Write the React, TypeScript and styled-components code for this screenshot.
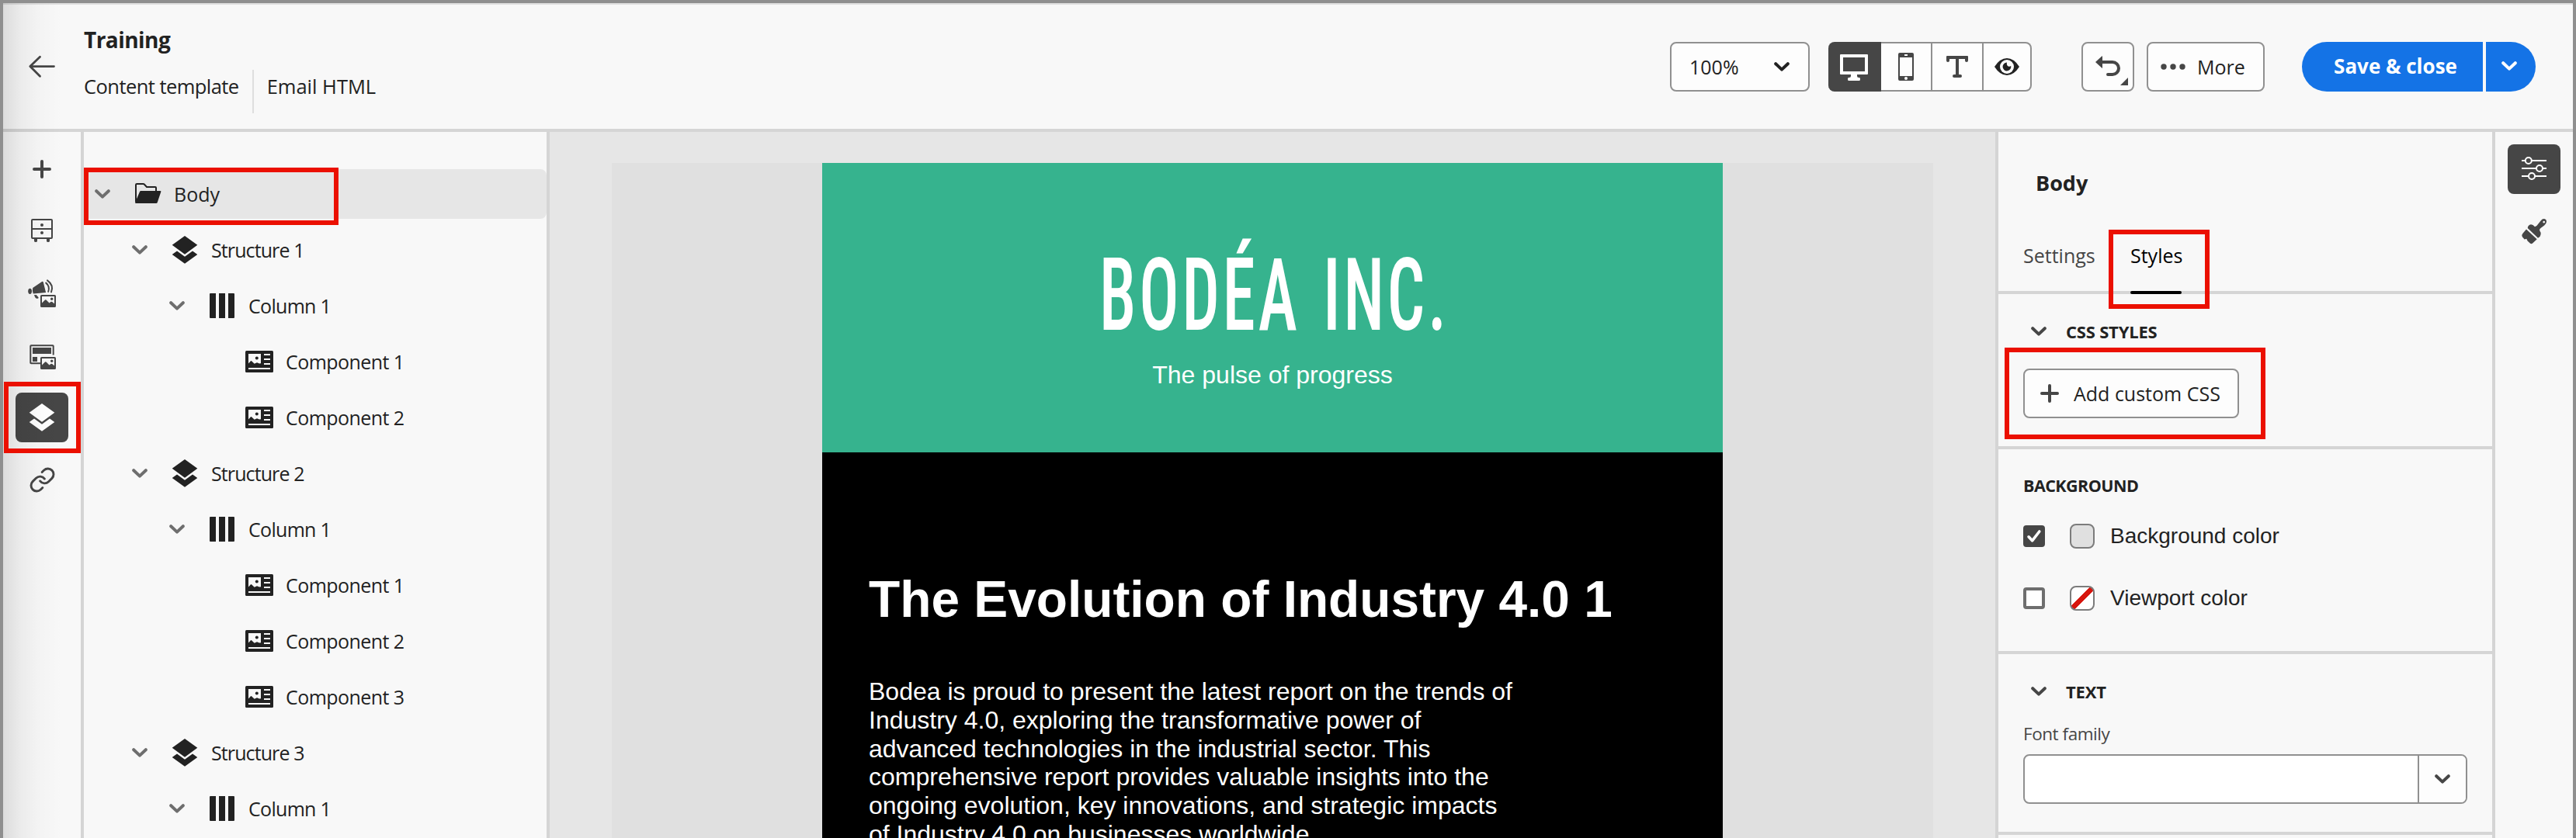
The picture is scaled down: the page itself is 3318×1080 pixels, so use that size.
import React from 'react';
import styled, { createGlobalStyle, css } from 'styled-components';
import { Link } from 'lucide-react';

const ink = '#222222';
const iconGrey = '#464646';
const line = '#d5d5d5';
const surface = '#f8f8f8';
const control = '#909090';
const alertRed = '#eb1000';

const GlobalStyle = createGlobalStyle`
  *, *::before, *::after { box-sizing: border-box; }
  body { margin: 0; background: ${surface}; }
  button { font: inherit; color: inherit; padding: 0; margin: 0; cursor: pointer; }
  svg { display: block; flex: none; }
`;

const Frame = styled.div`
  position: relative;
  display: flex;
  flex-direction: column;
  width: 3318px;
  height: 1080px;
  overflow: hidden;
  border: 4px solid #8f8f8f;
  border-bottom: 0;
  background: ${surface};
  color: ${ink};
  font-family: 'Open Sans', 'Noto Sans', sans-serif;
  font-size: 25px;
  white-space: nowrap;
`;

const EdgeShade = styled.div`
  position: absolute;
  inset: 0 auto 0 0;
  width: 76px;
  pointer-events: none;
  background: linear-gradient(
    to right,
    rgba(0, 0, 0, 0.115),
    rgba(0, 0, 0, 0.05) 30%,
    rgba(0, 0, 0, 0.02) 60%,
    rgba(0, 0, 0, 0)
  );
`;

const Highlight = styled.span<{ $x: number; $y: number; $w: number; $h: number }>`
  position: absolute;
  z-index: 2;
  left: ${(p) => p.$x}px;
  top: ${(p) => p.$y}px;
  width: ${(p) => p.$w}px;
  height: ${(p) => p.$h}px;
  border: 6px solid ${alertRed};
  pointer-events: none;
`;

/* ---------- header ---------- */

const Header = styled.header`
  display: flex;
  flex: none;
  height: 166px;
  border-top: 2px solid #dedede;
  border-bottom: 4px solid ${line};
`;

const BackButton = styled.button`
  display: flex;
  align-items: center;
  justify-content: center;
  width: 104px;
  padding-right: 4px;
  border: 0;
  background: none;
`;

const TitleBlock = styled.div`
  flex: 1;
  padding-top: 25px;
`;

const PageTitle = styled.h1`
  margin: 0 0 19px;
  font-size: 28px;
  line-height: 40px;
  font-weight: 700;
  letter-spacing: -0.55px;
`;

const Crumbs = styled.div`
  display: flex;
  height: 56px;
  font-size: 25.5px;
  line-height: 42px;
`;

const Crumb = styled.span`
  letter-spacing: -0.55px;
  & + & {
    letter-spacing: 0;
    margin-left: 17px;
    padding-left: 17px;
    border-left: 2px solid #dedede;
  }
`;

const Toolbar = styled.div`
  display: flex;
  align-items: center;
  padding-right: 48px;
`;

const box = css`
  height: 64px;
  border: 2px solid ${control};
  border-radius: 8px;
  background: #fdfdfd;
`;

const ZoomSelect = styled.button`
  ${box}
  display: flex;
  align-items: center;
  justify-content: space-between;
  width: 180px;
  padding: 0 24px 0 23px;
  margin-right: 24px;
`;

const ViewGroup = styled.div`
  display: flex;
  margin-right: 64px;
`;

const ViewButton = styled.button<{ $active?: boolean }>`
  ${box}
  display: flex;
  align-items: center;
  justify-content: center;
  width: 66px;
  border-left: 0;
  border-radius: 0;
  &:first-child { width: 68px; border-radius: 8px 0 0 8px; }
  &:last-child { width: 62px; border-radius: 0 8px 8px 0; }
  ${(p) => p.$active && css`
    background: ${iconGrey};
    border-color: ${iconGrey};
  `}
`;

const UndoButton = styled.button`
  ${box}
  width: 68px;
  margin-right: 16px;
`;

const MoreButton = styled.button`
  ${box}
  display: flex;
  align-items: center;
  width: 152px;
  gap: 15px;
  padding-left: 16px;
  margin-right: 48px;
`;

const SaveGroup = styled.div`
  display: flex;
  gap: 4px;
  color: #fff;
`;

const SaveButton = styled.button`
  width: 233px;
  height: 64px;
  padding: 0 0 2px 8px;
  border: 0;
  border-radius: 32px 0 0 32px;
  background: #1473e6;
  font-size: 26px;
  font-weight: 700;
`;

const SaveMenuButton = styled.button`
  display: flex;
  align-items: center;
  width: 64px;
  padding: 0 0 2px 20px;
  border: 0;
  border-radius: 0 32px 32px 0;
  background: #1473e6;
`;

/* ---------- body ---------- */

const Workspace = styled.div`
  display: flex;
  flex: 1;
  min-height: 0;
`;

const Rail = styled.nav<{ $side: 'left' | 'right' }>`
  display: flex;
  flex-direction: column;
  align-items: center;
  flex: none;
  gap: 16px;
  width: 104px;
  padding-top: 16px;
  ${(p) => (p.$side === 'left' ? 'border-right' : 'border-left')}: 4px solid ${line};
`;

const RailButton = styled.button<{ $active?: boolean }>`
  position: relative;
  display: flex;
  align-items: center;
  justify-content: center;
  width: 68px;
  height: 64px;
  border: 0;
  border-radius: 8px;
  color: ${(p) => (p.$active ? '#fff' : iconGrey)};
  background: ${(p) => (p.$active ? iconGrey : 'none')};
`;

const TreePanel = styled.aside`
  flex: none;
  width: 600px;
  padding-top: 48px;
  border-right: 4px solid ${line};
`;

const tracking = [0, -0.9, -0.7, -0.55];

const TreeRow = styled.div<{ $depth: number; $selected?: boolean }>`
  position: relative;
  display: flex;
  align-items: center;
  height: 64px;
  margin-bottom: 8px;
  padding-left: ${(p) => 14 + p.$depth * 48}px;
  border-radius: 8px;
  letter-spacing: ${(p) => tracking[p.$depth]}px;
  background: ${(p) => (p.$selected ? '#e6e6e6' : 'none')};
`;

const ChevronSlot = styled.span`
  width: 20px;
  margin-right: 30px;
  color: #6e6e6e;
`;

const TreeLabel = styled.span`
  margin-left: 16px;
`;

const Canvas = styled.main`
  display: flex;
  flex: 1;
  padding: 40px 80px 0;
  background: #e6e6e6;
`;

const Viewport = styled.div`
  display: flex;
  justify-content: center;
  flex: 1;
  background: #e0e0e0;
`;

const Email = styled.article`
  width: 1160px;
  overflow: hidden;
  background: #000;
  color: #fff;
  font-family: 'Liberation Sans', Arial, sans-serif;
`;

const Banner = styled.div`
  display: flex;
  flex-direction: column;
  align-items: center;
  height: 373px;
  padding-top: 96px;
  background: #36b38e;
`;

const Wordmark = styled.div`
  font-family: 'Roboto Condensed', Roboto, sans-serif;
  font-size: 129px;
  line-height: 150px;
  font-weight: 500;
  letter-spacing: 6px;
  margin-right: -6px;
  word-spacing: 9px;
  transform: scaleX(0.66);
`;

const Tagline = styled.p`
  margin: 9px 0 0;
  font-size: 32px;
  line-height: 37px;
`;

const Article = styled.div`
  padding: 149px 60px 0;
`;

const Headline = styled.h2`
  margin: 0 0 61px;
  font-size: 65.8px;
  line-height: 80px;
  font-weight: 700;
`;

const Copy = styled.p`
  width: 860px;
  margin: 0;
  font-size: 32px;
  line-height: 36.8px;
  white-space: pre-line;
`;

/* ---------- properties ---------- */

const Properties = styled.aside`
  flex: none;
  width: 640px;
  border-left: 4px solid ${line};
`;

const PanelTitle = styled.h2`
  margin: 0;
  padding-left: 48px;
  font-size: 27px;
  line-height: 132px;
  font-weight: 700;
`;

const Tabs = styled.div`
  display: flex;
  gap: 48px;
  height: 77px;
  padding-left: 32px;
  border-bottom: 4px solid ${line};
`;

const Tab = styled.div<{ $active?: boolean; $width: number }>`
  position: relative;
  width: ${(p) => p.$width}px;
  line-height: 54px;
  color: ${(p) => (p.$active ? '#000' : iconGrey)};
  ${(p) => p.$active && css`
    &::after {
      content: '';
      position: absolute;
      left: 0;
      bottom: -4px;
      width: 100%;
      height: 4px;
      border-radius: 2px;
      background: #000;
    }
  `}
`;

const Section = styled.section<{ $bottom: number }>`
  padding: 0 32px ${(p) => p.$bottom}px;
  border-bottom: 4px solid ${line};
`;

const Accordion = styled.h3<{ $height: number }>`
  display: flex;
  align-items: center;
  gap: 25px;
  height: ${(p) => p.$height}px;
  margin: 0;
  padding: ${(p) => 96 - p.$height}px 0 0 10px;
  font-size: 22px;
  font-weight: 700;
  letter-spacing: -0.2px;
  svg { color: ${iconGrey}; }
`;

const AddButton = styled.button`
  ${box}
  position: relative;
  display: flex;
  align-items: center;
  gap: 19px;
  width: 278px;
  padding-left: 20px;
`;

const GroupTitle = styled.h3`
  margin: 0;
  height: 72px;
  padding-top: 22px;
  font-size: 21.5px;
  line-height: 50px;
  font-weight: 700;
  letter-spacing: -0.55px;
`;

const ColorRow = styled.label`
  display: flex;
  align-items: center;
  height: 80px;
  font: 28px 'Liberation Sans', Arial, sans-serif;
`;

const Checkbox = styled.span<{ $checked?: boolean }>`
  display: flex;
  align-items: center;
  justify-content: center;
  width: 28px;
  height: 28px;
  margin-right: 32px;
  border-radius: 4px;
  border: 4px solid ${(p) => (p.$checked ? iconGrey : '#6e6e6e')};
  background: ${(p) => (p.$checked ? iconGrey : '#fff')};
`;

const Swatch = styled.span<{ $empty?: boolean }>`
  width: 32px;
  height: 32px;
  margin-right: 20px;
  border-radius: 8px;
  border: 2px solid #7c7c7c;
  background: ${(p) =>
    p.$empty
      ? 'linear-gradient(to bottom right, #fff 41%, #d7150d 41.5%, #d7150d 58.5%, #fff 59%)'
      : '#e0e0e0'};
`;

const FieldLabel = styled.div`
  height: 39px;
  font-size: 22.5px;
  line-height: 26px;
  letter-spacing: -0.45px;
  color: ${iconGrey};
`;

const ComboBox = styled.div`
  ${box}
  display: flex;
  width: 572px;
  background: #fff;
  color: ${iconGrey};
`;

const ComboInput = styled.div`
  flex: 1;
`;

const ComboButton = styled.button`
  display: flex;
  align-items: center;
  justify-content: center;
  width: 62px;
  border: 0;
  border-left: 2px solid ${control};
  border-radius: 0 6px 6px 0;
  background: #fdfdfd;
`;

/* ---------- icons ---------- */

const Chevron = () => (
  <svg width="20" height="12" viewBox="0 0 20 12" fill="none" stroke="currentColor" strokeWidth="4" strokeLinecap="round" strokeLinejoin="round">
    <path d="M2.2 2.2 10 9.6l7.8-7.4" />
  </svg>
);

const Plus = () => (
  <svg width="24" height="24" viewBox="0 0 24 24" fill="none" stroke={iconGrey} strokeWidth="4" strokeLinecap="round">
    <path d="M12 2v20M2 12h20" />
  </svg>
);

const Icon = ({ children }: { children: React.ReactNode }) => (
  <svg width="36" height="36" viewBox="0 0 36 36" fill="currentColor">
    {children}
  </svg>
);

const DrawerIcon = () => (
  <Icon>
    <rect x="5" y="3" width="26" height="24" rx="1" fill="none" stroke="currentColor" strokeWidth="2" />
    <path d="M5 14h26v2H5zM8 27h4v3.500q0 1.500-2 1.500t-2-1.500zM24 27h4v3.500q0 1.500-2 1.500t-2-1.500z" />
    <circle cx="18" cy="10" r="2" />
    <circle cx="18" cy="20" r="2" />
  </Icon>
);

const PictureBadge = () => (
  <>
    <rect x="17" y="21" width="18" height="14" rx="0.600" fill="none" stroke="currentColor" strokeWidth="2" />
    <path d="M17 31.500l5-5q1-.6 2 .5l3.500 3.500 2-1.500q1-.5 2 .3l3.500 3V35H17z" />
    <circle cx="30.700" cy="25.300" r="1.700" />
  </>
);

const MegaphoneIcon = () => (
  <Icon>
    <path d="M6.200 11 18 2.900q1.400-.8 1.800.8l3.300 13.300-16.300 1.400q-1.500-3.600-.6-7.400z" />
    <ellipse cx="2.600" cy="15.300" rx="2.400" ry="3.600" />
    <path d="M7.800 20.300l3.200-.3.600 1.200 1 .8 1.200 2q-2.600 1.800-4.200-.2z" />
    <path d="M23.200 4.600q5.400 4.400 3 11.200M25 1.400q8.600 6.200 5 15" fill="none" stroke="currentColor" strokeWidth="2" strokeLinecap="round" />
    <PictureBadge />
  </Icon>
);

const FragmentIcon = () => (
  <Icon>
    <path d="M32.700 17.500V6q0-.8-.8-.8H4.100q-.8 0-.8.8v21.500q0 .8.800.8H16" fill="none" stroke="currentColor" strokeWidth="2" />
    <path d="M6 8h24v8H6zM6 20h6v6H6z" />
    <PictureBadge />
  </Icon>
);

const LayersIcon = () => (
  <Icon>
    <path d="M18 0 34.300 11.700 18 23.700 1.700 11.700zM8 19.400l10 7.300 10-7.300 6.300 4.600L18 35.700 1.700 24z" />
  </Icon>
);

const FolderIcon = () => (
  <Icon>
    <path d="M3 28V6.200Q3 5 4.200 5h8.300q.8 0 1.300.5L17 9h11q1 0 1 1v5" fill="none" stroke="currentColor" strokeWidth="2" />
    <path d="M9.500 14H34.500q1.200 0 .8 1.200l-4.600 13.700q-.4 1.100-1.500 1.100H3q-1.300 0-.8-1.400L8 15q.4-1 1.500-1z" />
  </Icon>
);

const ColumnsIcon = () => (
  <Icon>
    <path d="M3 2h7v32H3q-1 0-1-1V3q0-1 1-1zM14 2h8v32h-8zM26 2h7q1 0 1 1v30q0 1-1 1h-7z" />
  </Icon>
);

const ComponentIcon = () => (
  <Icon>
    <rect y="4" width="36" height="28" rx="1.500" />
    <path fill={surface} d="M4 8h16v12.300l-2 .2-3-1.200-3.300 1.500L8 17.300q-.7-.5-1.300.2L4 20.500zM24 8h8v2h-8zM24 14h8v2h-8zM24 20h8v2h-8zM4 26h28v2H4z" />
    <circle cx="14.800" cy="13.500" r="2" />
  </Icon>
);

const MonitorIcon = () => (
  <Icon>
    <path fill="#fff" fillRule="evenodd" d="M1 2h34q1 0 1 1v24q0 1-1 1H22v2q0 2 2 2h1q1 0 1 2t-1 2H11q-1 0-1-2t1-2h1q2 0 2-2v-2H1q-1 0-1-1V3q0-1 1-1zm3 4v18h28V6z" />
  </Icon>
);

const PhoneIcon = () => (
  <Icon>
    <path fill={iconGrey} fillRule="evenodd" d="M10 0h16q2 0 2 2v32q0 2-2 2H10q-2 0-2-2V2q0-2 2-2zm0 6v24h16V6zm6-4v2h4V2z" />
    <circle cx="18" cy="33" r="2" fill="#fff" />
  </Icon>
);

const TypeIcon = () => (
  <Icon>
    <path fill={iconGrey} d="M5 4h26q1 0 1 1v5q0 2-2 2t-2-2V8h-8v20h2q2 0 2 2t-2 2h-8q-2 0-2-2t2-2h2V8H8v2q0 2-2 2t-2-2V5q0-1 1-1z" />
  </Icon>
);

const EyeIcon = () => (
  <Icon>
    <path fill={ink} d="M2 18Q9 7 18 7t16 11q-7 11-16 11T2 18z" />
    <circle cx="18" cy="18" r="9" fill="#fdfdfd" />
    <path fill={ink} d="M18 12.600a5.400 5.400 0 1 0 5.200 4.200q-1.400 1.400-3.400.7-2.600-1.200-1.800-4.900z" />
  </Icon>
);

const UndoIcon = () => (
  <svg width="64" height="60" viewBox="0 0 64 60">
    <path d="M25 24h13a8 8 0 0 1 0 16h-6" fill="none" stroke={iconGrey} strokeWidth="4" strokeLinecap="round" />
    <path d="M16 24l8.200-7.600q.8-.6.800.4v14.400q0 1-.8.4z" fill={iconGrey} />
    <path d="M48 54l10-10v10z" fill={iconGrey} />
  </svg>
);

const DotsIcon = () => (
  <svg width="32" height="8" viewBox="0 0 32 8" fill={iconGrey}>
    <circle cx="4" cy="4" r="3.700" />
    <circle cx="16" cy="4" r="3.700" />
    <circle cx="28" cy="4" r="3.700" />
  </svg>
);

const BackIcon = () => (
  <svg width="36" height="30" viewBox="0 0 36 30" fill="none" stroke={iconGrey} strokeWidth="2.800" strokeLinecap="round" strokeLinejoin="round">
    <path d="M33.500 14.600H3M15.500 2.200 2.800 14.600l12.700 12.600" />
  </svg>
);

const SlidersIcon = () => (
  <svg width="36" height="36" viewBox="0 0 36 36" fill={iconGrey} stroke="#fff" strokeWidth="2">
    <path d="M2 7h32M2 17h32M2 27h32" />
    <circle cx="10.800" cy="7" r="4" />
    <circle cx="25" cy="17" r="4" />
    <circle cx="15" cy="27" r="4" />
  </svg>
);

const BrushIcon = () => (
  <Icon>
    <path fillRule="evenodd" d="M9.700 14q.5-4.400 4.300-4.800 2.600.2 5 3 2.400-.3 4-3.200l3.600-4.600Q28.500 2 31 2.100q3.200.6 3 3.900-.3 2.300-2.800 4.400l-4.400 3.400q-2.300 1.400-1.600 3.400 2.200 2.600 1.300 5.300-.3 3-3.500 4.300zM30.700 4.700a1.400 1.400 0 1 0 .01 0z" />
    <path d="M8 15.400 21.700 28.300l-5.600 5.300q-1.500 1-3 .2l-3.300-3q-1-1.600-1.500-3l-2.600.6-2.900-3.200q-1.300-2.200.7-4.400z" />
  </Icon>
);

const CheckIcon = () => (
  <svg width="20" height="20" viewBox="0 0 20 20" fill="none" stroke="#fff" strokeWidth="3.600" strokeLinecap="round" strokeLinejoin="round">
    <path d="M3 10.800l4.600 5L16.800 4" />
  </svg>
);

/* ---------- data ---------- */

type Kind = 'folder' | 'structure' | 'column' | 'component';

const kindIcon: Record<Kind, React.ComponentType> = {
  folder: FolderIcon,
  structure: LayersIcon,
  column: ColumnsIcon,
  component: ComponentIcon,
};

const kindDepth: Record<Kind, number> = { folder: 0, structure: 1, column: 2, component: 3 };

const tree: { kind: Kind; label: string }[] = [
  { kind: 'folder', label: 'Body' },
  { kind: 'structure', label: 'Structure 1' },
  { kind: 'column', label: 'Column 1' },
  { kind: 'component', label: 'Component 1' },
  { kind: 'component', label: 'Component 2' },
  { kind: 'structure', label: 'Structure 2' },
  { kind: 'column', label: 'Column 1' },
  { kind: 'component', label: 'Component 1' },
  { kind: 'component', label: 'Component 2' },
  { kind: 'component', label: 'Component 3' },
  { kind: 'structure', label: 'Structure 3' },
  { kind: 'column', label: 'Column 1' },
];

const copy = `Bodea is proud to present the latest report on the trends of
Industry 4.0, exploring the transformative power of
advanced technologies in the industrial sector. This
comprehensive report provides valuable insights into the
ongoing evolution, key innovations, and strategic impacts
of Industry 4.0 on businesses worldwide.`;

export default function App() {
  return (
    <Frame>
      <GlobalStyle />
      <Header>
        <BackButton aria-label="Back"><BackIcon /></BackButton>
        <TitleBlock>
          <PageTitle>Training</PageTitle>
          <Crumbs>
            <Crumb>Content template</Crumb>
            <Crumb>Email HTML</Crumb>
          </Crumbs>
        </TitleBlock>
        <Toolbar>
          <ZoomSelect>100%<Chevron /></ZoomSelect>
          <ViewGroup>
            <ViewButton $active><MonitorIcon /></ViewButton>
            <ViewButton><PhoneIcon /></ViewButton>
            <ViewButton><TypeIcon /></ViewButton>
            <ViewButton><EyeIcon /></ViewButton>
          </ViewGroup>
          <UndoButton aria-label="Undo"><UndoIcon /></UndoButton>
          <MoreButton><DotsIcon />More</MoreButton>
          <SaveGroup>
            <SaveButton>Save &amp; close</SaveButton>
            <SaveMenuButton><Chevron /></SaveMenuButton>
          </SaveGroup>
        </Toolbar>
      </Header>

      <Workspace>
        <Rail $side="left">
          <RailButton><Plus /></RailButton>
          <RailButton><DrawerIcon /></RailButton>
          <RailButton><MegaphoneIcon /></RailButton>
          <RailButton><FragmentIcon /></RailButton>
          <RailButton $active>
            <LayersIcon />
            <Highlight $x={-15} $y={-14} $w={99} $h={92} />
          </RailButton>
          <RailButton><Link size={35} strokeWidth={2} /></RailButton>
        </Rail>

        <TreePanel>
          {tree.map(({ kind, label }, i) => {
            const KindIcon = kindIcon[kind];
            return (
              <TreeRow key={i} $depth={kindDepth[kind]} $selected={i === 0}>
                <ChevronSlot>{kind !== 'component' && <Chevron />}</ChevronSlot>
                <KindIcon />
                <TreeLabel>{label}</TreeLabel>
                {i === 0 && <Highlight $x={0} $y={-2} $w={328} $h={74} />}
              </TreeRow>
            );
          })}
        </TreePanel>

        <Canvas>
          <Viewport>
            <Email>
              <Banner>
                <Wordmark>BODÉA INC.</Wordmark>
                <Tagline>The pulse of progress</Tagline>
              </Banner>
              <Article>
                <Headline>The Evolution of Industry 4.0 1</Headline>
                <Copy>{copy}</Copy>
              </Article>
            </Email>
          </Viewport>
        </Canvas>

        <Properties>
          <PanelTitle>Body</PanelTitle>
          <Tabs>
            <Tab $width={90}>Settings</Tab>
            <Tab $width={66} $active>
              Styles
              <Highlight $x={-28} $y={-6} $w={130} $h={102} />
            </Tab>
          </Tabs>
          <Section $bottom={36}>
            <Accordion $height={96}><Chevron />CSS STYLES</Accordion>
            <AddButton>
              <Plus />
              Add custom CSS
              <Highlight $x={-26} $y={-29} $w={336} $h={118} />
            </AddButton>
          </Section>
          <Section $bottom={28}>
            <GroupTitle>BACKGROUND</GroupTitle>
            <ColorRow><Checkbox $checked><CheckIcon /></Checkbox><Swatch />Background color</ColorRow>
            <ColorRow><Checkbox /><Swatch $empty />Viewport color</ColorRow>
          </Section>
          <Section $bottom={36}>
            <Accordion $height={90}><Chevron />TEXT</Accordion>
            <FieldLabel>Font family</FieldLabel>
            <ComboBox>
              <ComboInput />
              <ComboButton><Chevron /></ComboButton>
            </ComboBox>
          </Section>
        </Properties>

        <Rail $side="right">
          <RailButton $active><SlidersIcon /></RailButton>
          <RailButton><BrushIcon /></RailButton>
        </Rail>
      </Workspace>
      <EdgeShade />
    </Frame>
  );
}
